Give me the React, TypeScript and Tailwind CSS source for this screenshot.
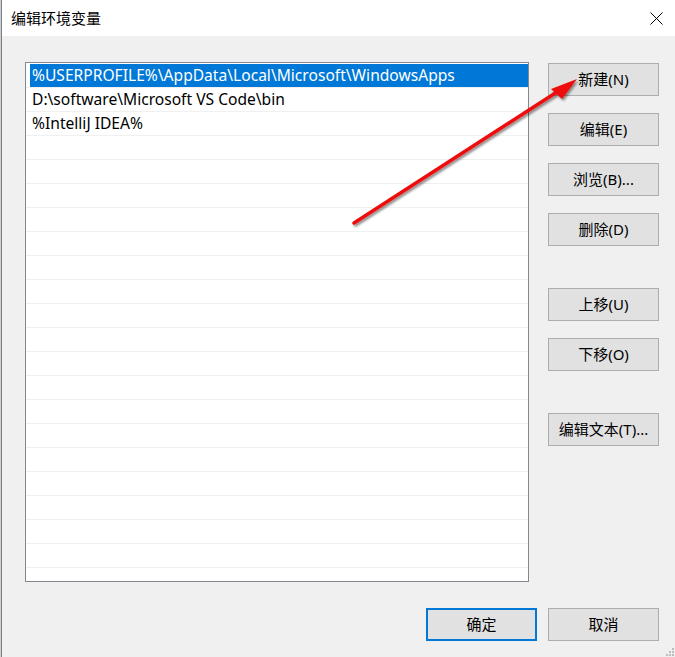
import React from "react";

const rows = [
  "%USERPROFILE%\\AppData\\Local\\Microsoft\\WindowsApps",
  "D:\\software\\Microsoft VS Code\\bin",
  "%IntelliJ IDEA%",
];

function Btn({ label, className = "" }: { label: string; className?: string }) {
  return (
    <div
      className={`flex h-[33px] w-[111px] items-center justify-center border border-[#adadad] bg-[#e1e1e1] text-[15px] text-black ${className}`}
    >
      {label}
    </div>
  );
}

export default function App() {
  const empty = Array.from({ length: 19 });
  return (
    <div
      className="relative flex h-[657px] w-[675px] overflow-hidden bg-[#f0f0f0]"
      style={{ fontFamily: '"Noto Sans", "Noto Sans CJK SC", sans-serif' }}
    >
      <div className="w-[1px] bg-[#c9cfd4]" />
      <div className="flex flex-1 flex-col border-l border-[#7f7f7f]">
        {/* title bar */}
        <div className="flex h-[36px] items-center justify-between bg-white pl-[9px] pr-[12px]">
          <span className="text-[15px] leading-none text-black">编辑环境变量</span>
          <svg width="13" height="13" viewBox="0 0 13 13">
            <path d="M0.5 0.5 L12.5 12.5 M12.5 0.5 L0.5 12.5" stroke="#000" strokeWidth="1" />
          </svg>
        </div>
        {/* body */}
        <div className="flex flex-1 flex-col pl-[23px] pt-[26px]">
          <div className="flex">
            <div className="h-[520px] w-[504px] overflow-hidden border border-[#828790] bg-white pt-[1px]">
              {rows.map((r, i) => (
                <div key={i} className="h-[24px] border-b border-[#f0f0f0]">
                  <div
                    className={`ml-[4px] flex h-[23px] items-center pl-[2px] text-[15.6px] leading-none ${
                      i === 0 ? "bg-[#0078d7] text-white" : "text-black"
                    }`}
                  >
                    {r}
                  </div>
                </div>
              ))}
              {empty.map((_, i) => (
                <div key={i} className="h-[24px] border-b border-[#f0f0f0]" />
              ))}
            </div>
            <div className="ml-[19px] flex flex-col pt-[1px]">
              <Btn label="新建(N)" />
              <Btn label="编辑(E)" className="mt-[17px]" />
              <Btn label="浏览(B)..." className="mt-[17px]" />
              <Btn label="删除(D)" className="mt-[17px]" />
              <Btn label="上移(U)" className="mt-[42px]" />
              <Btn label="下移(O)" className="mt-[17px]" />
              <Btn label="编辑文本(T)..." className="mt-[42px]" />
            </div>
          </div>
          <div className="mt-[26px] flex pl-[401px]">
            <div className="flex h-[33px] w-[111px] items-center justify-center border-2 border-[#0078d7] bg-[#e1e1e1] text-[15px] text-black">
              确定
            </div>
            <Btn label="取消" className="ml-[11px]" />
          </div>
        </div>
      </div>
      {/* resize grip */}
      <svg className="absolute bottom-[1px] right-[1px]" width="8" height="8" viewBox="0 0 8 8">
        <rect x="6" y="0" width="2" height="2" fill="#bcbcbc" />
        <rect x="3" y="3" width="2" height="2" fill="#bcbcbc" />
        <rect x="6" y="3" width="2" height="2" fill="#bcbcbc" />
        <rect x="0" y="6" width="2" height="2" fill="#bcbcbc" />
        <rect x="3" y="6" width="2" height="2" fill="#bcbcbc" />
        <rect x="6" y="6" width="2" height="2" fill="#bcbcbc" />
      </svg>
      {/* red arrow annotation */}
      <svg className="pointer-events-none absolute left-0 top-0" width="675" height="657">
        <defs>
          <filter id="sh" x="-20%" y="-20%" width="140%" height="140%">
            <feDropShadow dx="1.5" dy="2" stdDeviation="1.2" floodColor="#000" floodOpacity="0.45" />
          </filter>
        </defs>
        <g filter="url(#sh)">
          <line x1="354" y1="223" x2="560" y2="90" stroke="#ee1111" strokeWidth="3.5" strokeLinecap="round" />
          <polygon points="577,79 551,89 562,99" fill="#ee1111" />
        </g>
      </svg>
    </div>
  );
}
